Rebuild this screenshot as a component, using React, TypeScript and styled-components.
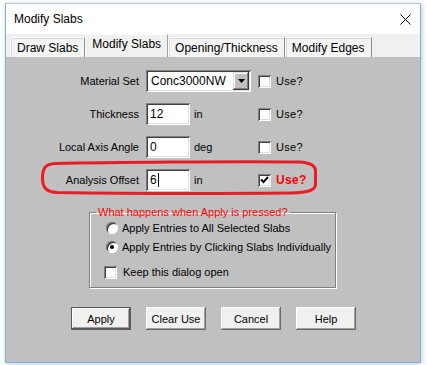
import React from 'react';
import styled, {createGlobalStyle} from 'styled-components';

const GlobalStyle = createGlobalStyle`
    html, body {
        margin: 0;
        padding: 0;
        background: #ffffff;
    }
    body {
        font-family: "Liberation Sans", Arial, sans-serif;
        font-size: 11px;
        color: #000;
    }
`;

const Screen = styled.div`
    width: 427px;
    height: 365px;
    padding: 3px 0 0 5px;
    box-sizing: border-box;
    overflow: hidden;
`;

const Window = styled.div`
    width: 416px;
    height: 360px;
    box-sizing: border-box;
    display: flex;
    flex-direction: column;
    background: #ffffff;
    border: 1px solid #7ab3e9;
    border-top-color: #b8c8d8;
    box-shadow: 1px 1px 5px rgba(0, 0, 0, 0.22);
`;

const TitleBar = styled.div`
    height: 30px;
    display: flex;
    align-items: center;
    justify-content: space-between;
    padding: 0 9px 0 8px;
    font-size: 12px;
`;

const CloseButton = styled.div`
    width: 12px;
    height: 12px;
    display: flex;
    align-items: center;
    justify-content: center;
`;

const TabStrip = styled.div`
    height: 23px;
    background: #f0f0f0;
    display: flex;
    align-items: flex-end;
    padding-left: 4px;
`;

const Tab = styled.div<{ $active?: boolean }>`
    box-sizing: border-box;
    height: ${p => (p.$active ? 23 : 20)}px;
    padding: ${p => (p.$active ? '2px 6px 0' : '3px 6px 0')};
    font-size: 12px;
    white-space: nowrap;
    background: ${p => (p.$active ? '#f0f0f0' : '#f4f4f4')};
    border-top: 1px solid #ffffff;
    border-left: 1px solid #ffffff;
    border-right: 1px solid ${p => (p.$active ? '#a0a0a0' : '#8a8a8a')};
    box-shadow: ${p => (p.$active ? 'none' : 'inset 1px 1px 0 #dadada')};
`;

const Panel = styled.div`
    position: relative;
    flex: 1;
    background: #c0c0c0;
    display: flex;
    flex-direction: column;
    align-items: flex-start;
    padding-top: 13px;
`;

const Rows = styled.div`
    display: flex;
    flex-direction: column;
    gap: 11px;
`;

const Row = styled.div`
    height: 22px;
    display: flex;
    align-items: center;
`;

const Label = styled.div`
    width: 133px;
    text-align: right;
    margin-right: 7px;
`;

const FieldCell = styled.div`
    width: 112px;
    display: flex;
    align-items: center;
    gap: 4px;
`;

const sunken = `
    box-shadow: inset 1px 1px 0 #808080, inset -1px -1px 0 #ffffff,
        inset 2px 2px 0 #404040, inset -2px -2px 0 #dfdfdf;
`;

const TextBox = styled.div`
    box-sizing: border-box;
    width: 44px;
    height: 22px;
    background: #ffffff;
    ${sunken};
    display: flex;
    align-items: center;
    padding-left: 4px;
    font-size: 12px;
`;

const Caret = styled.span`
    display: inline-block;
    width: 1px;
    height: 14px;
    background: #000;
    margin-left: 1px;
`;

const Combo = styled.div`
    box-sizing: border-box;
    width: 105px;
    height: 22px;
    background: #ffffff;
    ${sunken};
    display: flex;
    align-items: center;
    justify-content: space-between;
    padding: 2px 2px 2px 5px;
    font-size: 12px;
`;

const DropButton = styled.div`
    box-sizing: border-box;
    width: 16px;
    height: 18px;
    background: #c0c0c0;
    box-shadow: inset -1px -1px 0 #404040, inset 1px 1px 0 #dfdfdf,
        inset -2px -2px 0 #808080, inset 2px 2px 0 #ffffff;
    display: flex;
    align-items: center;
    justify-content: center;
`;

const UseCell = styled.div<{ $on?: boolean }>`
    display: flex;
    align-items: center;
    gap: 5px;
    font-size: ${p => (p.$on ? 12 : 11)}px;
    font-weight: ${p => (p.$on ? 'bold' : 'normal')};
    color: ${p => (p.$on ? '#ff0000' : '#000')};
    letter-spacing: 0.3px;
`;

const CheckBox = styled.span`
    box-sizing: border-box;
    width: 13px;
    height: 13px;
    flex: none;
    background: #ffffff;
    ${sunken};
    display: flex;
    align-items: center;
    justify-content: center;
`;

const Annotation = styled.svg`
    position: absolute;
    left: 35px;
    top: 103px;
`;

const Group = styled.fieldset`
    margin: 15px 0 0 83px;
    width: 247px;
    box-sizing: border-box;
    padding: 2px 0 7px 16px;
    border: 1px solid #808080;
    box-shadow: inset 1px 1px 0 #ffffff, 1px 1px 0 #ffffff;
    display: flex;
    flex-direction: column;
    gap: 3px;
`;

const Legend = styled.legend`
    color: #ff0000;
    padding: 0 2px;
    margin-left: -10px;
`;

const Option = styled.div<{ $spaced?: boolean }>`
    height: 16px;
    display: flex;
    align-items: center;
    gap: ${p => (p.$spaced ? 6 : 4)}px;
    margin-top: ${p => (p.$spaced ? 6 : 0)}px;
    margin-left: ${p => (p.$spaced ? -2 : 0)}px;
`;

const Radio = styled.span<{ $on?: boolean }>`
    box-sizing: border-box;
    width: 12px;
    height: 12px;
    border-radius: 50%;
    background: #ffffff;
    box-shadow: inset 1px 1px 0 #808080, inset -1px -1px 0 #ffffff,
        inset 2px 2px 0 #404040;
    display: flex;
    align-items: center;
    justify-content: center;
    &::after {
        content: '';
        width: 4px;
        height: 4px;
        border-radius: 50%;
        background: ${p => (p.$on ? '#000' : 'transparent')};
    }
`;

const ButtonRow = styled.div`
    display: flex;
    gap: 15px;
    margin: 19px 0 0 65px;
`;

const DialogButton = styled.button<{ $default?: boolean }>`
    box-sizing: border-box;
    width: 60px;
    height: 23px;
    padding: 0;
    font-family: "Liberation Sans", Arial, sans-serif;
    font-size: 11px;
    color: #000;
    background: #f0f0f0;
    border: ${p => (p.$default ? '1px solid #5a5a5a' : 'none')};
    box-shadow: ${p =>
        p.$default
            ? 'inset -1px -1px 0 #5a5a5a, inset 1px 1px 0 #ffffff, inset -2px -2px 0 #a0a0a0'
            : 'inset -1px -1px 0 #696969, inset 1px 1px 0 #ffffff, inset -2px -2px 0 #a0a0a0'};
`;

const Check = () => (
    <svg width="9" height="8" viewBox="0 0 9 8">
        <path d="M1 3.5 L3.5 6 L8 1" stroke="#000" strokeWidth="2" fill="none"/>
    </svg>
);

interface FieldRowProps {
    label: string;
    value: string;
    unit?: string;
    combo?: boolean;
    caret?: boolean;
    used?: boolean;
}

const FieldRow: React.FC<FieldRowProps> = ({label, value, unit, combo, caret, used}) => (
    <Row>
        <Label>{label}</Label>
        <FieldCell>
            {combo ? (
                <Combo>
                    {value}
                    <DropButton>
                        <svg width="7" height="4" viewBox="0 0 7 4">
                            <path d="M0 0 H7 L3.5 4 Z" fill="#000"/>
                        </svg>
                    </DropButton>
                </Combo>
            ) : (
                <TextBox>
                    {value}
                    {caret && <Caret/>}
                </TextBox>
            )}
            {unit && <span>{unit}</span>}
        </FieldCell>
        <UseCell $on={used}>
            <CheckBox>{used && <Check/>}</CheckBox>
            Use?
        </UseCell>
    </Row>
);

const App: React.FC = () => (
    <Screen>
        <GlobalStyle/>
        <Window>
            <TitleBar>
                <span>Modify Slabs</span>
                <CloseButton>
                    <svg width="11" height="11" viewBox="0 0 11 11">
                        <path d="M0.5 0.5 L10.5 10.5 M10.5 0.5 L0.5 10.5" stroke="#000" strokeWidth="1"/>
                    </svg>
                </CloseButton>
            </TitleBar>
            <TabStrip>
                <Tab>Draw Slabs</Tab>
                <Tab $active>Modify Slabs</Tab>
                <Tab>Opening/Thickness</Tab>
                <Tab>Modify Edges</Tab>
            </TabStrip>
            <Panel>
                <Rows>
                    <FieldRow label="Material Set" value="Conc3000NW" combo/>
                    <FieldRow label="Thickness" value="12" unit="in"/>
                    <FieldRow label="Local Axis Angle" value="0" unit="deg"/>
                    <FieldRow label="Analysis Offset" value="6" unit="in" caret used/>
                </Rows>
                <Annotation width="277" height="35" viewBox="0 0 277 35">
                    <path
                        d="M14 3.5 C60 2.5 200 1 258 2 C269 2.5 274.5 5 274.5 11 L274.5 24 C274.5 30.5 267 32.5 250 33 C190 33.5 80 33.5 16 32.5 C5 32 1.5 27.5 1.5 18 C1.5 7.5 5 4 14 3.5 Z"
                        stroke="#ec1c24"
                        strokeWidth="3"
                        fill="none"
                    />
                </Annotation>
                <Group>
                    <Legend>What happens when Apply is pressed?</Legend>
                    <Option>
                        <Radio/>
                        Apply Entries to All Selected Slabs
                    </Option>
                    <Option>
                        <Radio $on/>
                        Apply Entries by Clicking Slabs Individually
                    </Option>
                    <Option $spaced>
                        <CheckBox/>
                        Keep this dialog open
                    </Option>
                </Group>
                <ButtonRow>
                    <DialogButton $default>Apply</DialogButton>
                    <DialogButton>Clear Use</DialogButton>
                    <DialogButton>Cancel</DialogButton>
                    <DialogButton>Help</DialogButton>
                </ButtonRow>
            </Panel>
        </Window>
    </Screen>
);

export default App;
